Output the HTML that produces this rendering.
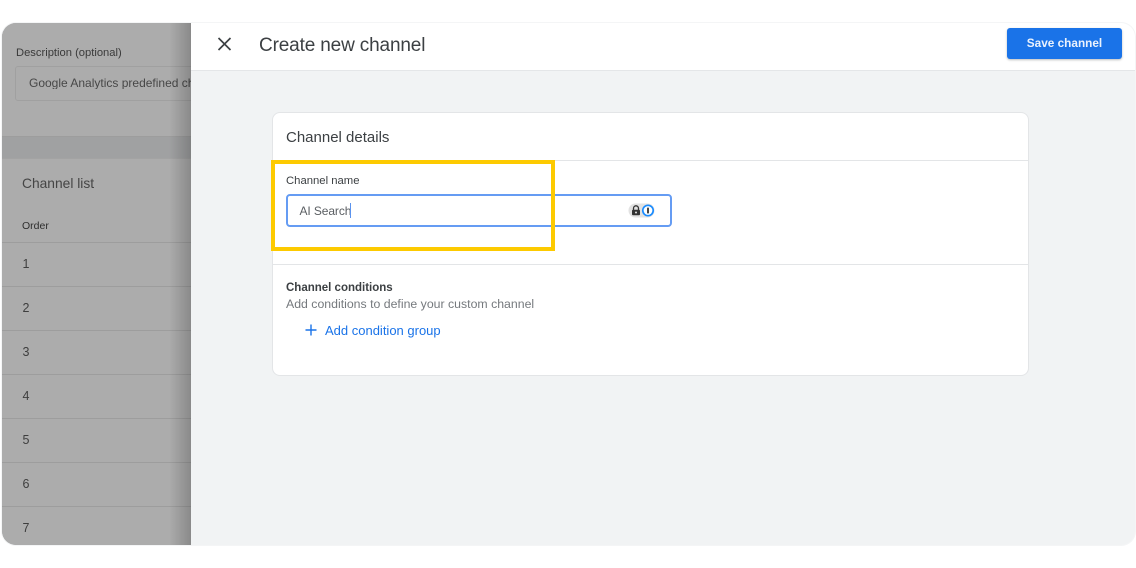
<!DOCTYPE html>
<html>
<head>
<meta charset="utf-8">
<style>
html,body{margin:0;padding:0;background:#fff;}
body{width:1136px;height:568px;position:relative;overflow:hidden;font-family:"Liberation Sans",Arial,sans-serif;}
.a{position:absolute;}
.t{position:absolute;white-space:nowrap;line-height:1;}
#frame{left:2px;top:23px;width:1133px;height:522px;border-radius:14px;overflow:hidden;background:#f1f3f4;}
.num{color:#3e3e3e;font-size:12.5px;left:20.5px;}
.line{left:0;width:189px;height:1px;background:#9d9d9d;}
</style>
</head>
<body>
<div class="a" style="left:2px;top:23px;width:1133px;height:522px;border-radius:14px;box-shadow:0 0 0 1px #f4f5f6;"></div>
<div id="frame" class="a">
  <div class="a" style="left:0;top:0;width:189px;height:522px;background:#a0a1a2;"></div>
  <div class="a" style="left:0;top:0;width:189px;height:113px;background:#acacac;border-bottom:1px solid #9d9d9d;"></div>
  <div class="a" style="left:0;top:135px;width:189px;height:387px;background:#acacac;border-top:1px solid #a3a3a3;"></div>
  <div class="t" style="left:14px;top:25px;font-size:11.2px;color:#3a3a3a;">Description (optional)</div>
  <div class="a" style="left:13px;top:43px;width:190px;height:33px;border:1px solid #a0a0a0;border-radius:3px;"></div>
  <div class="t" style="left:27px;top:54px;font-size:12px;color:#474747;width:165px;overflow:hidden;">Google Analytics predefined channels</div>
  <div class="t" style="left:20px;top:154px;font-size:13.8px;color:#454545;">Channel list</div>
  <div class="t" style="left:20px;top:198px;font-size:10.5px;color:#2e2e2e;">Order</div>
  <div class="a line" style="top:219px;"></div>
  <div class="t num" style="top:235px;">1</div>
  <div class="a line" style="top:263px;"></div>
  <div class="t num" style="top:279px;">2</div>
  <div class="a line" style="top:307px;"></div>
  <div class="t num" style="top:323px;">3</div>
  <div class="a line" style="top:351px;"></div>
  <div class="t num" style="top:367px;">4</div>
  <div class="a line" style="top:395px;"></div>
  <div class="t num" style="top:411px;">5</div>
  <div class="a line" style="top:439px;"></div>
  <div class="t num" style="top:455px;">6</div>
  <div class="a line" style="top:483px;"></div>
  <div class="t num" style="top:499px;">7</div>
  <div class="a" style="left:167px;top:0;width:22px;height:522px;background:linear-gradient(to right,rgba(0,0,0,0),rgba(0,0,0,.2));"></div>

  <div class="a" style="left:189px;top:0;width:944px;height:522px;background:#f1f3f4;"></div>
  <div class="a" style="left:189px;top:0;width:944px;height:47px;background:#fff;border-bottom:1px solid #e4e6e8;"></div>
  <svg class="a" style="left:215px;top:14px;" width="15" height="14" viewBox="0 0 15 14"><path d="M1.5 1L13.5 13M13.5 1L1.5 13" stroke="#3c4043" stroke-width="1.7" fill="none"/></svg>
  <div class="t" style="left:257px;top:13px;font-size:19px;color:#3c4043;letter-spacing:-.15px;">Create new channel</div>
  <div class="a" style="left:1005px;top:5px;width:115px;height:31px;background:#1a73e8;border-radius:3px;box-shadow:0 1px 2px rgba(60,64,67,.35);"></div>
  <div class="t" style="left:1005px;top:15px;width:115px;text-align:center;font-size:11.8px;font-weight:bold;color:#eaf2fd;">Save channel</div>

  <div class="a" style="left:270px;top:89px;width:755px;height:262px;background:#fff;border:1px solid #e3e5e7;border-radius:8px;"></div>
  <div class="t" style="left:284px;top:107px;font-size:15px;color:#3c4043;">Channel details</div>
  <div class="a" style="left:271px;top:137px;width:755px;height:1px;background:#e3e5e7;"></div>
  <div class="t" style="left:284px;top:153px;font-size:11.3px;color:#3c4043;">Channel name</div>
  <div class="a" style="left:284px;top:171px;width:382px;height:29px;border:2px solid #659cf3;border-radius:4px;background:#fff;"></div>
  <div class="t" style="left:297.5px;top:182px;font-size:12px;color:#5a5e62;letter-spacing:-.1px;">AI Search</div>
  <div class="a" style="left:348px;top:180px;width:1px;height:15px;background:#5b93ee;"></div>
  <svg class="a" style="left:626px;top:180px;" width="28" height="15" viewBox="0 0 28 15">
    <rect x="0.5" y="0.5" width="26" height="14" rx="7" fill="#e2e2e2"/>
    <path d="M5.5 7V5.3a2.5 2.5 0 0 1 5 0V7" fill="none" stroke="#333" stroke-width="1.3"/>
    <rect x="4" y="6.8" width="8" height="5.5" rx="1" fill="#333"/>
    <circle cx="8" cy="9.5" r="1" fill="#e2e2e2"/>
    <circle cx="20" cy="7.5" r="5.2" fill="#fff" stroke="#1a8cff" stroke-width="1.7"/>
    <rect x="19" y="4.5" width="2" height="6" rx=".8" fill="#444"/>
  </svg>
  <div class="a" style="left:271px;top:241px;width:755px;height:1px;background:#e3e5e7;"></div>
  <div class="t" style="left:284px;top:260px;font-size:11.5px;font-weight:bold;color:#3c4043;">Channel conditions</div>
  <div class="t" style="left:284px;top:275px;font-size:12.3px;color:#75797d;">Add conditions to define your custom channel</div>
  <svg class="a" style="left:303px;top:301px;" width="12" height="12" viewBox="0 0 12 12"><path d="M6 .5V11.5M.5 6H11.5" stroke="#1a73e8" stroke-width="1.4" fill="none"/></svg>
  <div class="t" style="left:323px;top:301px;font-size:13px;color:#1a73e8;">Add condition group</div>

  <div class="a" style="left:269px;top:137px;width:276px;height:83px;border:4px solid #fdca00;"></div>
</div>
</body>
</html>
